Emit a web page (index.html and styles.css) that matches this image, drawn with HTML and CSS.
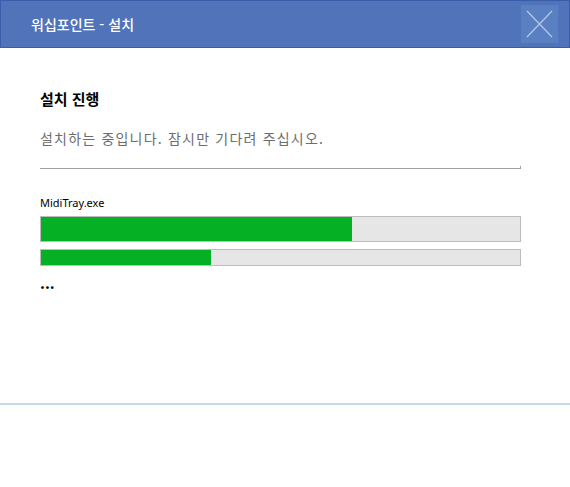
FILE: index.html
```html
<!DOCTYPE html>
<html lang="ko">
<head>
    <meta charset="UTF-8">
    <meta name="viewport" content="width=device-width, initial-scale=1.0">
    <title>워십포인트 - 설치</title>
    <link rel="stylesheet" href="styles.css">
</head>
<body>
    <header class="titlebar">
        <span class="title">워십포인트 - 설치</span>
        <button class="close" type="button" aria-label="닫기">
            <svg width="37" height="38" viewBox="0 0 37 38">
                <line x1="6" y1="6" x2="31" y2="32" stroke="#b4c8ec" stroke-width="1.2"/>
                <line x1="31" y1="6" x2="6" y2="32" stroke="#b4c8ec" stroke-width="1.2"/>
            </svg>
        </button>
    </header>

    <main class="content">
        <h1 class="heading">설치 진행</h1>
        <p class="desc">설치하는 중입니다. 잠시만 기다려 주십시오.</p>
        <div class="rule"></div>

        <div class="file">MidiTray.exe</div>
        <div class="bar bar-big"><div class="fill" style="width: 65%"></div></div>
        <div class="bar bar-small"><div class="fill" style="width: 35.4%"></div></div>
        <div class="dots">...</div>
    </main>

    <footer class="footer"></footer>
</body>
</html>
```

FILE: styles.css
```css
body {
    margin: 0;
    width: 570px;
    height: 487px;
    background: #fff;
    font-family: "Noto Sans CJK KR", "Noto Sans", sans-serif;
    overflow: hidden;
}
.titlebar {
    box-sizing: border-box;
    height: 48px;
    display: flex;
    align-items: center;
    padding-left: 30px;
    padding-right: 11px;
    background: #5073ba;
    border: 1px solid #3a5cab;
}
.title {
    color: #fff;
    font-size: 14px;
    font-weight: 500;
}
.close {
    margin-left: auto;
    width: 37px;
    height: 38px;
    padding: 0;
    border: none;
    background: #5a80c2;
    display: flex;
}
.content {
    box-sizing: border-box;
    height: 355px;
    padding: 40px 49px 0 40px;
}
.heading {
    margin: 0;
    font-size: 15px;
    font-weight: bold;
    line-height: 22px;
    color: #000;
}
.desc {
    margin: 17px 0 0;
    font-size: 14px;
    line-height: 22px;
    letter-spacing: 1.2px;
    color: #6d6d6d;
}
.rule {
    height: 2px;
    margin-top: 17px;
    border-bottom: 1px solid #a0a0a0;
    border-right: 1px solid #a0a0a0;
}
.file {
    margin-top: 26px;
    font-family: "Noto Sans", sans-serif;
    font-size: 11px;
    line-height: 16px;
    color: #000;
}
.bar {
    box-sizing: border-box;
    background: #e6e6e6;
    border: 1px solid #bcbcbc;
}
.bar-big {
    height: 26px;
    margin-top: 5px;
}
.bar-small {
    height: 17px;
    margin-top: 7px;
}
.fill {
    height: 100%;
    background: #06b025;
}
.dots {
    margin-top: 7px;
    font-size: 15px;
    font-weight: bold;
    line-height: 20px;
    color: #000;
}
.footer {
    height: 80px;
    border-top: 2px solid #c5d9e6;
}
```
